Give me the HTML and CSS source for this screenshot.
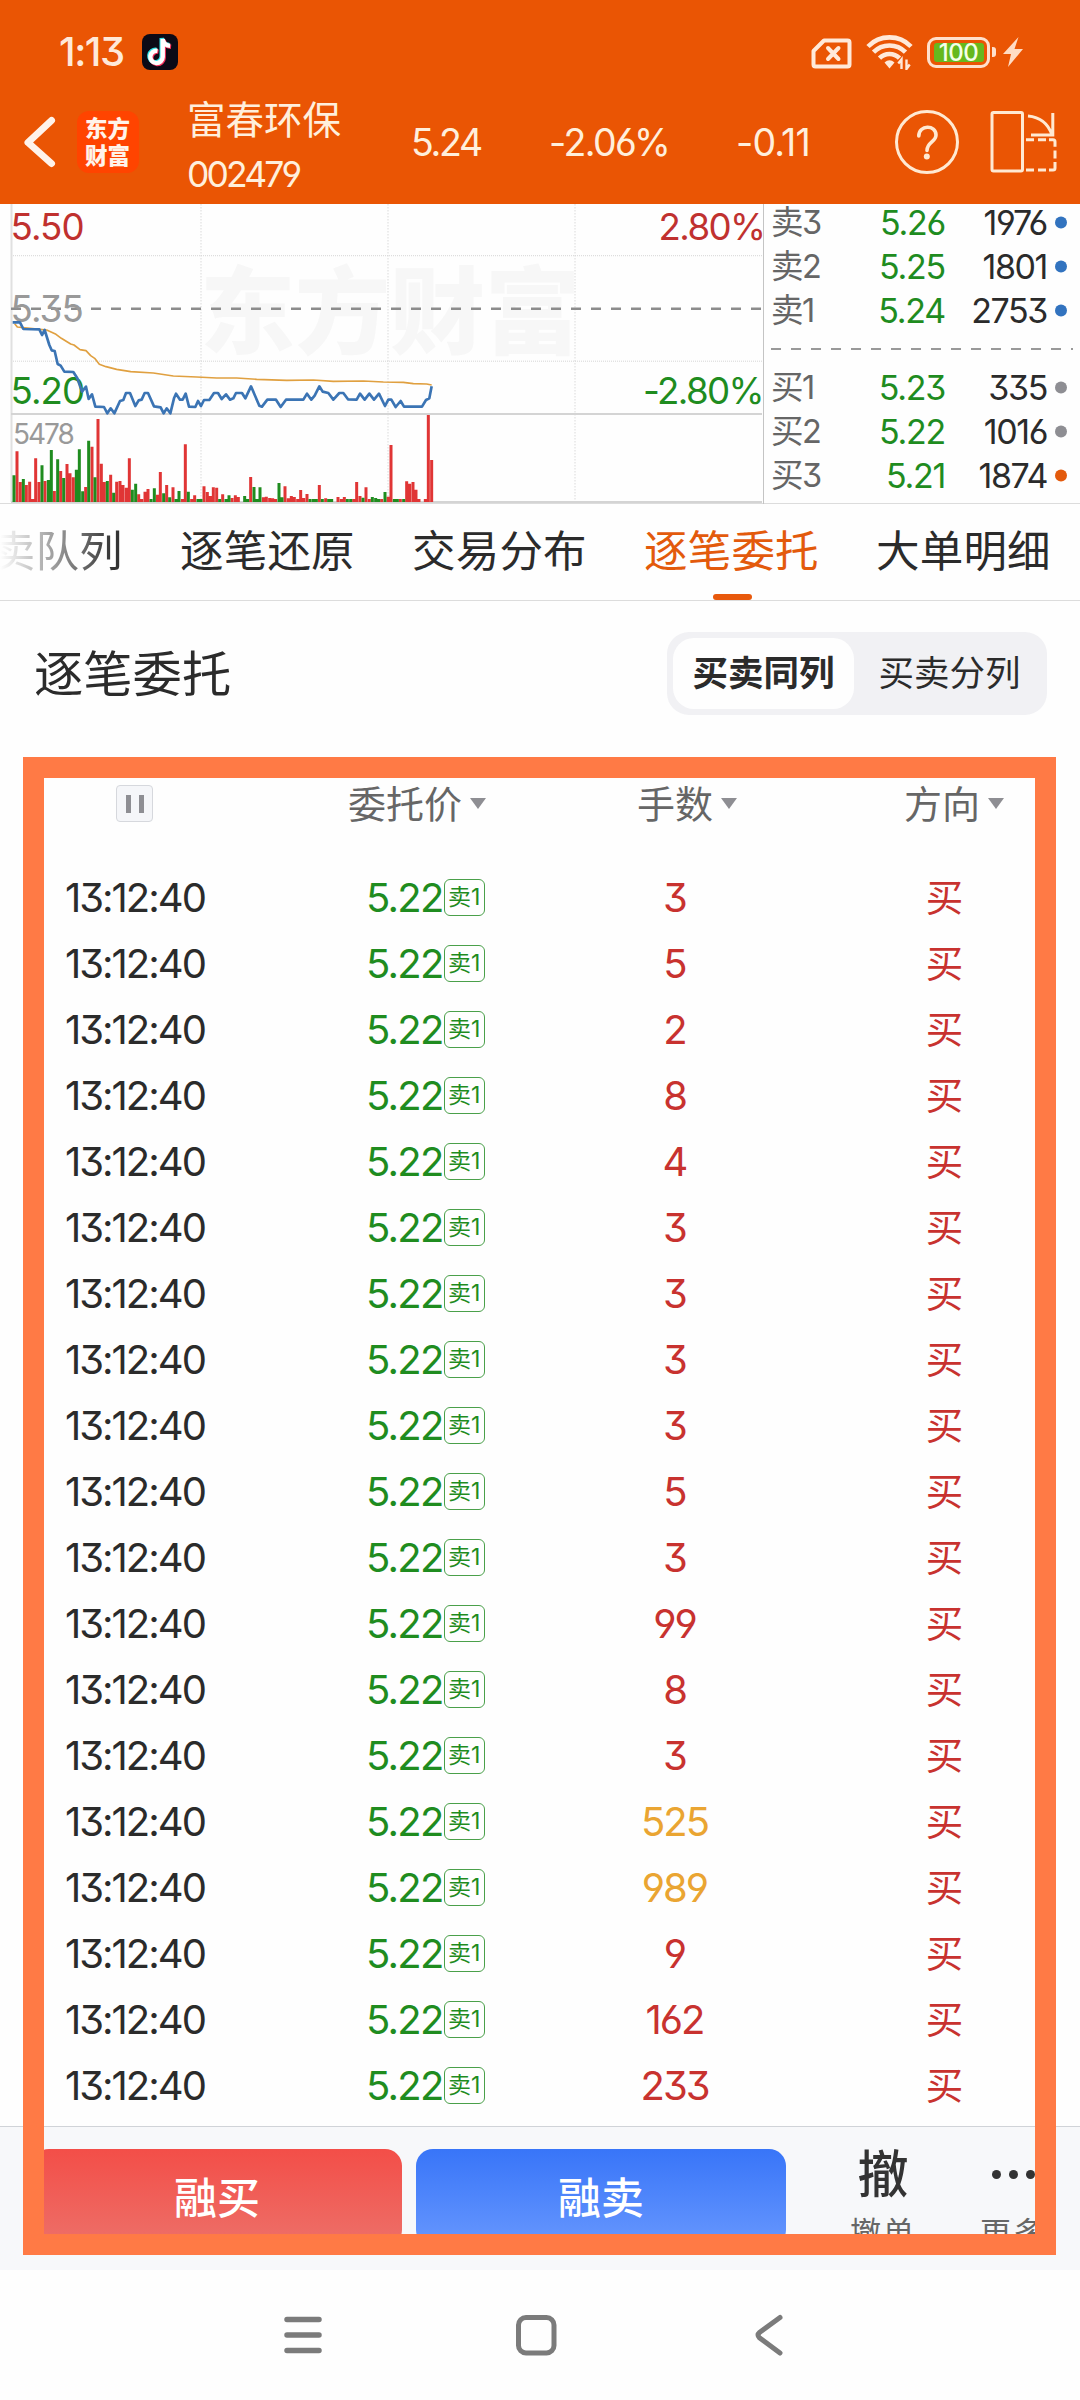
FILE: index.html
```html
<!DOCTYPE html>
<html lang="zh-CN">
<head>
<meta charset="utf-8">
<title>富春环保 002479</title>
<link rel="stylesheet" href="styles.css">
</head>
<body>
<header class="header">
  <div class="status">
    <span class="clock">1:13</span>
    <svg class="tiktok" width="36" height="36" viewBox="0 0 36 36">
      <rect width="36" height="36" rx="8" fill="#0c0a16"/>
      <g fill="none" stroke-width="4.4">
        <path d="M15.500 16.800a6.200 6.200 0 1 0 5.200 6.200V5c.4 3.600 3 6.400 7.400 6.800" stroke="#2de2e6" transform="translate(-1 -.9)"/>
        <path d="M15.500 16.800a6.200 6.200 0 1 0 5.200 6.200V5c.4 3.600 3 6.400 7.400 6.800" stroke="#f5305c" transform="translate(1 .9)"/>
        <path d="M15.500 16.800a6.200 6.200 0 1 0 5.200 6.200V5c.4 3.600 3 6.400 7.400 6.800" stroke="#fff"/>
      </g>
    </svg>
    <svg class="sim" width="42" height="34" viewBox="0 0 42 34" fill="none" stroke="#ffe9d9" stroke-width="4" stroke-linejoin="round">
      <path d="M13 3.500H36.500a2 2 0 0 1 2 2V27.500a2 2 0 0 1-2 2H4.500a2 2 0 0 1-2-2V14Z"/>
      <path d="M17 11l10.500 11M27.500 11L17 22" stroke-linecap="round"/>
    </svg>
    <svg class="wifi" width="48" height="36" viewBox="0 0 48 36" fill="none" stroke="#ffe9d9" stroke-width="4.600">
      <path d="M2 12.500a30 30 0 0 1 43 0M7.500 18.200a22.500 22.500 0 0 1 32 0M13.500 24.200a14 14 0 0 1 20 0"/>
      <path d="M18.500 28.500q5-4.500 10 0L23.500 34.500z" fill="#ffe9d9" stroke="none"/>
      <path d="M35.500 35V25.500l-3.200 4M40.500 25.500V35l3.200-4.500" stroke-width="2.400"/>
    </svg>
    <span class="battery"><span class="charge">100</span></span>
    <i class="nub"></i>
    <svg class="bolt" width="20" height="30" viewBox="0 0 20 30"><path d="M15.500 0L0 17h8L5 30 20 12h-8.500z" fill="#ffdcc4"/></svg>
  </div>
  <div class="quote">
    <svg class="back" width="34" height="54" viewBox="0 0 34 54" fill="none" stroke="#fff3ea" stroke-width="7" stroke-linecap="round" stroke-linejoin="round"><path d="M29.500 5.500L6 27.500 29.500 48.500"/></svg>
    <div class="logo"><span>东方</span><span>财富</span></div>
    <div class="stock"><span class="name">富春环保</span><span class="code">002479</span></div>
    <span class="fig price">5.24</span>
    <span class="fig pct">-2.06%</span>
    <span class="fig chg">-0.11</span>
    <svg class="help" width="66" height="66" viewBox="0 0 66 66" fill="none" stroke="#ffe9d2" stroke-width="3">
      <circle cx="33" cy="33" r="30.500"/>
      <path d="M24.800 27c0-11.500 17.200-11.500 17.200-1 0 7-9 7-9 15.500" stroke-width="3.600" stroke-linecap="round"/>
      <circle cx="32.800" cy="47.500" r="3" fill="#ffe9d2" stroke="none"/>
    </svg>
    <svg class="rotate" width="70" height="64" viewBox="0 0 70 64" fill="none" stroke="#ffe9d2" stroke-width="3">
      <rect x="3" y="2.500" width="30.500" height="58.500" rx="1.500"/>
      <path d="M39 6c11 1 20 7 24 19M63.800 3v22H42"/>
      <path d="M37 29.700h8M49 29.700h8M60 29.700h4q2 0 2 2v5M66 40.500v8M66 52v6q0 2-2 2h-4M57 60h-8M45 60h-8"/>
    </svg>
  </div>
</header>

<section class="market">
  <svg class="chart" width="764" height="300" viewBox="0 0 764 300">
    <g class="watermark"><text x="200" y="143">东方财富</text></g>
    <g transform="translate(0 -9)">
      <g fill="none">
        <path d="M201 9V307M388 9V307M575 9V307" stroke="#e6e6e6" stroke-width="1.500" stroke-dasharray="1.500 1.500"/>
        <path d="M11 60.700H762M11 166.200H762" stroke="#d6d6d6" stroke-dasharray="1 1"/>
        <path d="M11.500 9V307" stroke="#e0e0e0" stroke-width="2"/>
        <path d="M11 219H762M11 307H762" stroke="#d4d4d4" stroke-width="2"/>
        <path d="M763.500 9V309" stroke="#c4c4c4"/>
        <path d="M11 113.700H762" stroke="#8c8c8c" stroke-width="2.400" stroke-dasharray="10 10"/>
      </g>
      <g transform="scale(.33333)" fill="none">
        <path stroke="#e03535" stroke-width="9" d="M51 921V769M61 921V861M79 921V870M89 921V860M98 921V912M107 921V790M117 921V861M135 921V858M163 921V888M182 921V828M201 921V807M210 921V835M220 921V847M257 921V876M276 921V755M294 921V672M304 921V806M313 921V861M332 921V839M350 921V860M360 921V858M369 921V870M379 921V878M388 921V790M416 921V898M425 921V912M435 921V890M444 921V882M472 921V899M481 921V831M500 921V870M519 921V877M547 921V912M556 921V748M575 921V912M584 921V901M612 921V874M622 921V891M631 921V903M640 921V877M650 921V878M668 921V898M696 921V909M706 921V901M715 921V906M752 921V846M790 921V907M799 921V905M809 921V909M818 921V910M827 921V912M855 921V874M865 921V910M874 921V903M883 921V906M893 921V912M902 921V885M911 921V909M921 921V897M958 921V870M977 921V910M1014 921V906M1024 921V912M1033 921V906M1061 921V912M1070 921V861M1080 921V903M1098 921V877M1108 921V912M1145 921V912M1164 921V905M1173 921V750M1201 921V912M1220 921V859M1229 921V866M1239 921V861M1248 921V884M1257 921V912M1276 921V912M1285 921V660M1295 921V795"/>
        <path stroke="#1f8c1f" stroke-width="9" d="M42 921V841M70 921V852M126 921V811M145 921V855M154 921V765M173 921V793M191 921V849M229 921V824M238 921V763M248 921V889M266 921V737M285 921V847M322 921V858M341 921V893M397 921V884M407 921V866M453 921V912M463 921V880M491 921V895M509 921V907M528 921V912M537 921V888M565 921V890M594 921V912M603 921V912M659 921V912M678 921V912M687 921V901M734 921V903M743 921V912M762 921V876M771 921V912M780 921V877M837 921V864M846 921V907M930 921V912M940 921V912M949 921V912M967 921V912M986 921V912M995 921V912M1042 921V912M1052 921V912M1089 921V908M1117 921V906M1127 921V909M1136 921V912M1155 921V891M1183 921V912M1192 921V912M1211 921V912"/>
      </g>
      <g class="axis">
        <text class="up" x="10.500" y="45.200">5.50</text>
        <text class="mid" x="10.500" y="127.200">5.35</text>
        <text class="down" x="10.500" y="209.200">5.20</text>
        <text class="up tight" x="658.500" y="45.200">2.80%</text>
        <text class="down tight" x="643" y="209.200">-2.80%</text>
        <text class="vol" x="13" y="248.800">5478</text>
      </g>
      <g transform="scale(.33333)" fill="none" stroke-linejoin="round">
        <path stroke="#e0a040" stroke-width="5" d="M44 386L52 396 90 400 140 405 168 418 184 430 212 447 222 450 240 464 258 467 272 482 284 490 298 508 318 515 350 523 392 530 460 534 520 543 590 546 650 549 710 549 770 553 860 556 940 555 1000 559 1090 558 1150 561 1210 562 1240 566 1280 567 1295 570"/>
        <path stroke="#3b74b4" stroke-width="8" d="M38 382H60L70 402 118 403 126 420 134 405 148 450 155 466 164 468 173 507 182 512 193 530 220 531 232 550 246 590 258 575 266 612 276 598 286 635 312 636 322 655 332 640 343 655 360 618 370 615 378 594H390L406 633 416 616 425 614 434 594H444L462 634 482 637 491 655 500 640 511 655 522 610 528 596 540 614H548L557 596 567 635 586 636 594 618 603 633 612 615H628L642 594H654L665 612 678 598 690 614 700 610 708 594H726L736 610 753 574 778 632 786 635 802 614H828L842 636 858 614H910L921 596 934 614 944 602 958 574 968 590 985 594 1000 614 1018 594H1030L1044 613 1070 614 1080 596 1094 614 1108 596 1122 614 1137 596 1155 633 1165 614H1174L1187 636 1202 618 1212 635H1266L1278 615 1288 610 1295 574"/>
      </g>
    </g>
  </svg>
  <div class="book">
    <div class="level"><span class="side">卖3</span><span class="bid">5.26</span><span class="lots">1976</span><i class="dot blue"></i></div>
    <div class="level"><span class="side">卖2</span><span class="bid">5.25</span><span class="lots">1801</span><i class="dot blue"></i></div>
    <div class="level"><span class="side">卖1</span><span class="bid">5.24</span><span class="lots">2753</span><i class="dot blue"></i></div>
    <div class="split"></div>
    <div class="level"><span class="side">买1</span><span class="bid">5.23</span><span class="lots">335</span><i class="dot gray"></i></div>
    <div class="level"><span class="side">买2</span><span class="bid">5.22</span><span class="lots">1016</span><i class="dot gray"></i></div>
    <div class="level"><span class="side">买3</span><span class="bid">5.21</span><span class="lots">1874</span><i class="dot orange"></i></div>
  </div>
</section>

<nav class="tabs">
  <span class="tab faded">买卖队列</span>
  <span class="tab">逐笔还原</span>
  <span class="tab">交易分布</span>
  <span class="tab active">逐笔委托</span>
  <span class="tab">大单明细</span>
</nav>

<section class="heading">
  <h1>逐笔委托</h1>
  <div class="segmented"><span class="seg on">买卖同列</span><span class="seg">买卖分列</span></div>
</section>

<section class="orders">
  <div class="thead">
    <span class="pause"><i></i><i></i></span>
    <span class="th th-price">委托价<b></b></span>
    <span class="th th-qty">手数<b></b></span>
    <span class="th th-dir">方向<b></b></span>
  </div>
  <div class="row"><span>13:12:40</span><span class="p">5.22<em>卖1</em></span><span class="q">3</span><span class="d">买</span></div>
  <div class="row"><span>13:12:40</span><span class="p">5.22<em>卖1</em></span><span class="q">5</span><span class="d">买</span></div>
  <div class="row"><span>13:12:40</span><span class="p">5.22<em>卖1</em></span><span class="q">2</span><span class="d">买</span></div>
  <div class="row"><span>13:12:40</span><span class="p">5.22<em>卖1</em></span><span class="q">8</span><span class="d">买</span></div>
  <div class="row"><span>13:12:40</span><span class="p">5.22<em>卖1</em></span><span class="q">4</span><span class="d">买</span></div>
  <div class="row"><span>13:12:40</span><span class="p">5.22<em>卖1</em></span><span class="q">3</span><span class="d">买</span></div>
  <div class="row"><span>13:12:40</span><span class="p">5.22<em>卖1</em></span><span class="q">3</span><span class="d">买</span></div>
  <div class="row"><span>13:12:40</span><span class="p">5.22<em>卖1</em></span><span class="q">3</span><span class="d">买</span></div>
  <div class="row"><span>13:12:40</span><span class="p">5.22<em>卖1</em></span><span class="q">3</span><span class="d">买</span></div>
  <div class="row"><span>13:12:40</span><span class="p">5.22<em>卖1</em></span><span class="q">5</span><span class="d">买</span></div>
  <div class="row"><span>13:12:40</span><span class="p">5.22<em>卖1</em></span><span class="q">3</span><span class="d">买</span></div>
  <div class="row"><span>13:12:40</span><span class="p">5.22<em>卖1</em></span><span class="q">99</span><span class="d">买</span></div>
  <div class="row"><span>13:12:40</span><span class="p">5.22<em>卖1</em></span><span class="q">8</span><span class="d">买</span></div>
  <div class="row"><span>13:12:40</span><span class="p">5.22<em>卖1</em></span><span class="q">3</span><span class="d">买</span></div>
  <div class="row"><span>13:12:40</span><span class="p">5.22<em>卖1</em></span><span class="q big">525</span><span class="d">买</span></div>
  <div class="row"><span>13:12:40</span><span class="p">5.22<em>卖1</em></span><span class="q big">989</span><span class="d">买</span></div>
  <div class="row"><span>13:12:40</span><span class="p">5.22<em>卖1</em></span><span class="q">9</span><span class="d">买</span></div>
  <div class="row"><span>13:12:40</span><span class="p">5.22<em>卖1</em></span><span class="q">162</span><span class="d">买</span></div>
  <div class="row"><span>13:12:40</span><span class="p">5.22<em>卖1</em></span><span class="q">233</span><span class="d">买</span></div>
</section>

<footer class="actions">
  <span class="btn buy">融买</span>
  <span class="btn sell">融卖</span>
  <div class="act cancel"><span class="glyph">撤</span><span class="label">撤单</span></div>
  <div class="act more"><span class="glyph dots"><i></i><i></i><i></i></span><span class="label">更多</span></div>
</footer>

<div class="sysnav">
  <svg width="44" height="44" viewBox="0 0 44 44" stroke="#7b7b7b" stroke-width="5.500" stroke-linecap="round"><path d="M6 6.500H38M6 22H38M6 37.500H38"/></svg>
  <svg width="44" height="44" viewBox="0 0 44 44" fill="none" stroke="#7b7b7b" stroke-width="5"><rect x="4.500" y="4.500" width="35.500" height="35.500" rx="7.500"/></svg>
  <svg width="44" height="44" viewBox="0 0 44 44" fill="none" stroke="#7b7b7b" stroke-width="5" stroke-linecap="round"><path d="M33 4.500L12.500 19.500Q9.500 22 12.500 24.800L33 40"/></svg>
</div>
<div class="frame"></div>
</body>
</html>
```
FILE: styles.css
```css
* { box-sizing: border-box; margin: 0; padding: 0; }
body {
  position: relative;
  width: 1080px;
  height: 2400px;
  overflow: hidden;
  background: #fefefe;
  color: #2b2b2b;
  font-family: Inter, "Noto Sans CJK SC", sans-serif;
  font-feature-settings: "cv09", "cv03", "cv04";
}
i, em, b { font-style: normal; font-weight: 400; }
svg { display: block; flex: none; }

/* header */
.header { height: 204px; background: #ea5504; color: #ffefdc; }
.status { display: flex; align-items: center; height: 80px; padding: 24px 0 0 59px; }
.clock { width: 83px; font-size: 40px; font-weight: 500; letter-spacing: -1.44px; line-height: 56px; color: #ffe9d9; }
.sim { margin-left: 633px; margin-top: 4px; }
.wifi { margin-left: 13px; }
.battery {
  display: flex; align-items: center; justify-content: center;
  width: 63px; height: 31px; margin-left: 13px;
  border: 3px solid #ffe0cc; border-radius: 9px;
}
.charge {
  width: 50px; height: 19px; background: #66b81e; border-radius: 3px;
  font-size: 24px; font-weight: 500; line-height: 19px; letter-spacing: -.5px; text-align: center; color: #f4ffe8;
}
.nub { width: 4px; height: 10px; margin-left: 2px; border-radius: 0 3px 3px 0; background: #ffe0cc; }
.bolt { margin-left: 7px; }

.quote { display: flex; height: 124px; padding-left: 22px; }
.back { margin-top: 35px; }
.logo {
  display: flex; flex-direction: column; width: 62px; height: 62px; margin: 31px 0 0 21px; padding: 4px 0 0 8px;
  border-radius: 12px; background: #ff4400; color: #fff3ea;
}
.logo span { font-size: 22.5px; font-weight: 900; line-height: 27px; }
.stock { display: flex; flex-direction: column; width: 225px; padding: 18px 0 0 48px; }
.name { font-size: 38.5px; line-height: 45px; }
.code { font-size: 35.5px; line-height: 44px; letter-spacing: -2.9px; margin-top: 10px; }
.fig { font-size: 37.5px; line-height: 125px; }
.price { width: 139px; padding-left: 47px; letter-spacing: -2.3px; }
.pct { width: 188px; padding-left: 46px; letter-spacing: -1.6px; }
.chg { width: 158px; padding-left: 45px; letter-spacing: -.82px; }
.help { margin: 29px 0 0 45px; }
.rotate { margin: 30px 0 0 29px; }

/* market */
.market { display: flex; height: 300px; border-bottom: 1px solid #dcdcdc; }
.watermark text { font-size: 95px; font-weight: 900; fill: #f7f7f7; }
.axis text { font-size: 36.7px; letter-spacing: -.89px; }
.axis .tight { letter-spacing: -1.6px; }
.axis .up { fill: #c0312f; }
.axis .mid { fill: #999; }
.axis .down { fill: #1f8c1f; }
.axis .vol { font-size: 28px; letter-spacing: -2px; fill: #999; }
.book { flex: 1; padding-left: 7px; }
.level { display: grid; grid-template-columns: 50px 124px 102px 1fr; height: 44px; margin-top: 0; align-items: center; font-size: 34px; line-height: 44px; transform: translateY(-3.5px); }
.side { color: #666; font-size: 32.5px; letter-spacing: -1.5px; white-space: nowrap; }
.bid { text-align: right; color: #1f8c1f; letter-spacing: -1.26px; }
.lots { text-align: right; letter-spacing: -1.4px; }
.dot { width: 12px; height: 12px; margin-left: 8px; border-radius: 50%; }
.blue { background: #3273bf; }
.gray { background: #8e8e93; }
.orange { background: #e35a0c; }
.split { height: 2px; margin: 11.5px 7px 19px 0; background: repeating-linear-gradient(90deg, #999 0 10px, transparent 10px 20px); }

/* tabs */
.tabs { display: flex; gap: 58px; height: 97px; margin-left: -52px; border-bottom: 1px solid #dcdcdc; width: 1132px; overflow: hidden; }
.tab { position: relative; flex: none; width: 174px; font-size: 43.5px; line-height: 94px; white-space: nowrap; letter-spacing: .2px; }
.faded { background: linear-gradient(90deg, #fefefe 30%, #333 95%); -webkit-background-clip: text; background-clip: text; color: transparent; }
.active { color: #e35a0c; }
.active::after { content: ""; position: absolute; left: 69px; bottom: 0; width: 39px; height: 6px; border-radius: 3px; background: #e8590c; }

/* heading */
.heading { display: flex; justify-content: space-between; height: 156px; padding: 31px 33px 0 34px; }
h1 { font-size: 49.3px; font-weight: 400; line-height: 85px; }
.segmented { display: flex; width: 380px; height: 83px; padding: 6px; border-radius: 22px; background: #f1f1f4; }
.seg { width: 181px; border-radius: 21px; font-size: 35.5px; line-height: 72px; text-align: center; }
.on { background: #fefefe; font-weight: 700; }
.seg + .seg { margin-left: 5px; }

/* orders */
.orders { height: 1369px; padding-top: 20px; }
.thead { display: grid; grid-template-columns: 348px 289px 267px 1fr; height: 88px; font-size: 38px; line-height: 54px; color: #666; }
.pause { display: flex; justify-content: center; align-items: center; gap: 8px; width: 37px; height: 37px; margin: 8px 0 0 116px; border: 1px solid #d6d8dd; border-radius: 4px; background: #f5f6f9; }
.pause i { width: 5px; height: 18px; background: #8e8e93; }
.th b { display: inline-block; margin-left: 8px; vertical-align: 9px; border: 8.5px solid transparent; border-top: 11px solid #8e8e93; border-bottom: 0; }
.row { display: grid; grid-template-columns: 301px 244px 129px 71px 269px; height: 66px; padding-left: 65px; font-size: 40px; line-height: 66px; letter-spacing: -2px; }
.row .p { display: flex; align-items: center; color: #1f8c1f; letter-spacing: -1.72px; }
.row em { width: 41px; height: 37px; margin: 0 0 2px 1px; border: 1.5px solid #4aa04a; border-radius: 6px; font-size: 23px; line-height: 34px; letter-spacing: 0; text-align: center; }
.q { text-align: center; color: #c8322f; }
.big { color: #eaa532; }
.d { grid-column: 5; text-align: center; color: #c8322f; font-size: 37.5px; letter-spacing: 0; }

/* actions */
.actions { display: flex; height: 144px; padding: 22px 0 0 32px; border-top: 1px solid #d0d3d8; background: #f7f8fa; }
.btn { width: 370px; height: 98px; margin-right: 14px; border-radius: 17px; color: #fff; font-size: 43px; font-weight: 500; line-height: 98px; text-align: center; }
.buy { background: linear-gradient(#f34e48, #ed7069); }
.sell { background: linear-gradient(#3875f8, #6797fe); }
.act { display: flex; flex-direction: column; align-items: center; width: 130px; color: #333; }
.cancel { margin-left: 18px; }
.glyph { height: 50px; font-size: 51px; font-weight: 500; line-height: 51px; }
.label { margin-top: 14px; font-size: 31px; line-height: 40px; letter-spacing: 2px; color: #666; }
.dots { display: flex; gap: 8px; align-items: center; }
.dots i { width: 9px; height: 9px; border-radius: 50%; background: #333; }

/* system navigation */
.sysnav { display: flex; gap: 189px; height: 130px; padding: 43px 0 0 281px; background: #fefefe; }

/* highlight frame drawn over the page */
.frame { position: absolute; left: 23px; top: 757px; width: 1033px; height: 1498px; border: 21px solid #ff7a45; }
```
